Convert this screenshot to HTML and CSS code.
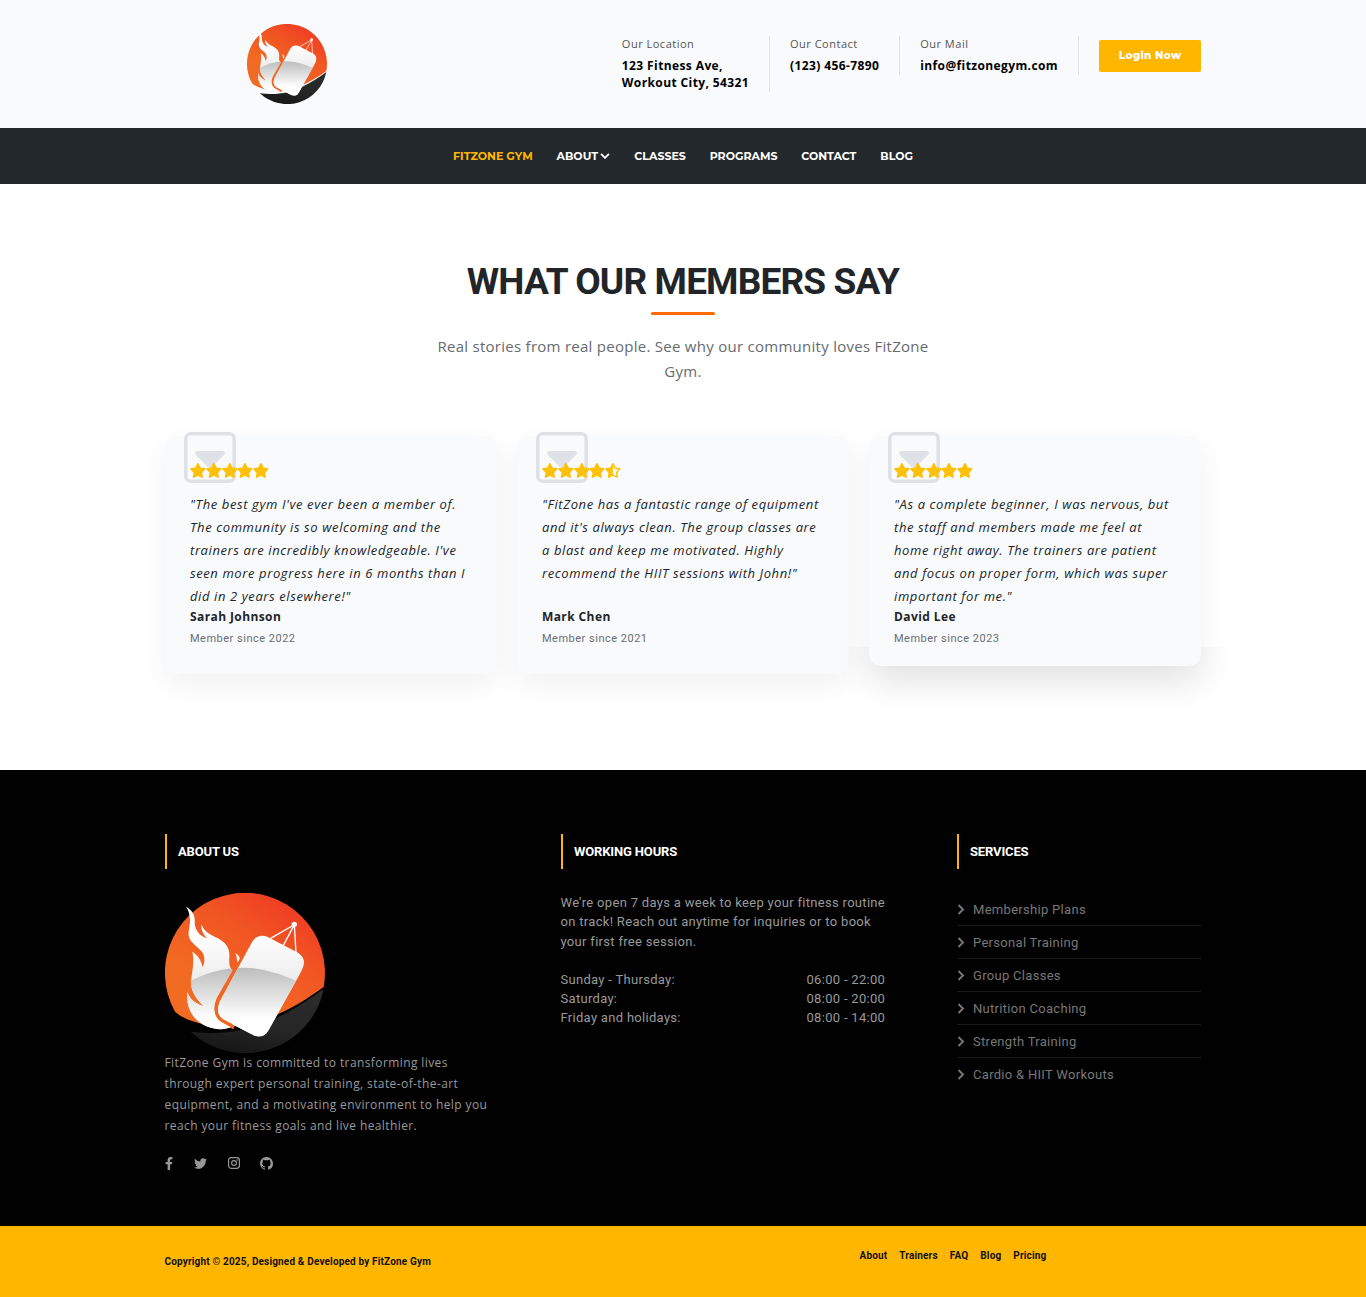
FILE: index.html
```html
<!DOCTYPE html>
<html lang="en">
<head>
<meta charset="utf-8">
<title>FitZone Gym</title>
<link rel="stylesheet" href="styles.css">
</head>
<body>
<svg class="sprite" aria-hidden="true">
  <defs>
    <linearGradient id="flame" x1="0.8" y1="0" x2="0.3" y2="0.7"><stop offset="0" stop-color="#ef3824"/><stop offset="0.45" stop-color="#f15423"/><stop offset="1" stop-color="#f26b22"/></linearGradient>
    <linearGradient id="coal" x1="0.8" y1="0" x2="0.4" y2="1"><stop offset="0" stop-color="#2b2b2b"/><stop offset="0.6" stop-color="#262626"/><stop offset="1" stop-color="#171717"/></linearGradient>
    <linearGradient id="upper" gradientUnits="userSpaceOnUse" x1="0" y1="150" x2="0" y2="290"><stop offset="0" stop-color="#fff"/><stop offset="1" stop-color="#ececec"/></linearGradient>
    <linearGradient id="lower" gradientUnits="userSpaceOnUse" x1="0" y1="248" x2="0" y2="400"><stop offset="0" stop-color="#bdbdbd"/><stop offset="1" stop-color="#fff"/></linearGradient>
    <clipPath id="shapes">
      <path d="M78 65C98 76 106 92 104 112C105 137 119 154 141 160C127 145 122 131 125 119C134 143 155 150 174 160C199 174 210 191 208 216C207 237 208 248 219 257L170 345C158 370 166 399 184 411L212 427C192 436 158 434 130 419C94 398 78 364 82 320C89 342 107 357 131 363C101 335 91 308 93 287C98 253 103 225 97 200C113 210 122 223 128 246C136 231 134 216 128 203C115 185 88 174 86 151C84 137 91 121 90 105C89 89 87 77 78 65Z"/>
      <path d="M226 204C237 211 240 218 239 222L233 233C229 222 231 213 226 204Z"/>
      <path d="M275 173Q291 145 322 155L414 203Q438 219 430 244Q427 255 418 270L326 435Q312 461 284 452L192 405Q168 389 176 361Q178 351 185 339Z"/>
    </clipPath>
    <symbol id="logo" viewBox="15 24 480 480">
      <path fill="url(#flame)" d="M45 380A240 240 0 1 1 491 306C440 343 390 374 340 393C270 424 200 431 140 420C101 412 68 400 45 380Z"/>
      <path fill="url(#coal)" d="M92 440C190 452 275 438 350 399C400 374 448 344 491 312A240 240 0 0 1 92 440Z"/>
      <path fill="none" stroke="#f26522" stroke-width="10" d="M222 258L173 342Q158 378 176 404Q184 412 222 428"/>
      <g clip-path="url(#shapes)"><path fill="url(#upper)" d="M60 50H450V470H60Z"/><path fill="url(#lower)" d="M60 307Q150 246 258 248Q350 252 450 310V480H60Z"/></g>
      <path fill="none" stroke="#f26522" stroke-width="9" d="M222 258L174 342Q160 376 176 398Q182 406 216 421"/>
      <path d="M332 160L403 119L370 181M403 119L408 204" fill="none" stroke="#fff" stroke-width="4"/>
      <circle cx="403" cy="118" r="8" fill="#fff"/>
    </symbol>
    <symbol id="star" viewBox="18 0 540 512"><path d="M316.9 18C311.6 7 300.4 0 288.1 0s-23.4 7-28.8 18L195 150.3 51.4 171.5c-12 1.8-22 10.2-25.7 21.7s-.7 24.2 7.9 32.7L137.8 329 113.2 474.7c-2 12 3 24.2 12.9 31.3s23 8 33.8 2.3l128.3-68.5 128.3 68.5c10.8 5.7 23.9 4.9 33.8-2.3s14.9-19.3 12.9-31.3L438.5 329 542.7 225.9c8.6-8.5 11.7-21.2 7.9-32.7s-13.7-19.9-25.7-21.7L381.2 150.3 316.9 18z"/></symbol>
    <symbol id="half" viewBox="18 0 540 512"><path fill-rule="evenodd" d="M316.9 18C311.6 7 300.4 0 288.1 0s-23.4 7-28.8 18L195 150.3 51.4 171.5c-12 1.8-22 10.2-25.7 21.7s-.7 24.2 7.9 32.7L137.8 329 113.2 474.7c-2 12 3 24.2 12.9 31.3s23 8 33.8 2.3l128.3-68.5 128.3 68.5c10.8 5.7 23.9 4.9 33.8-2.3s14.9-19.3 12.9-31.3L438.5 329 542.7 225.9c8.6-8.5 11.7-21.2 7.9-32.7s-13.7-19.9-25.7-21.7L381.2 150.3 316.9 18zM288 80l61 118 133 20-95 94 22 133-121-64z"/></symbol>
    <symbol id="caret" viewBox="0 0 52 51"><rect x="1.8" y="1.8" width="48.4" height="47.4" rx="5" fill="none" stroke="currentColor" stroke-width="3.6"/><path d="M13 19h26q3 1 1 4L28 35q-2 2-4 0L12 23q-2-3 1-4z"/></symbol>
    <symbol id="down" viewBox="0 0 10 6"><path d="M1 .8l4 4 4-4" fill="none" stroke="currentColor" stroke-width="1.8"/></symbol>
    <symbol id="right" viewBox="0 0 7 11"><path d="M1 1l4.5 4.5L1 10" fill="none" stroke="currentColor" stroke-width="1.9"/></symbol>
  </defs>
</svg>
<header class="top">
  <svg class="top-logo"><use href="#logo"/></svg>
  <div class="facts">
    <div class="fact"><span>Our Location</span><b>123 Fitness Ave,<br>Workout City, 54321</b></div>
    <div class="fact"><span>Our Contact</span><b>(123) 456-7890</b></div>
    <div class="fact"><span>Our Mail</span><b>info@fitzonegym.com</b></div>
    <a class="login">Login Now</a>
  </div>
</header>
<nav class="nav">
  <a class="active">FITZONE GYM</a><a>ABOUT <svg><use href="#down"/></svg></a><a>CLASSES</a><a>PROGRAMS</a><a>CONTACT</a><a>BLOG</a>
</nav>
<main class="reviews">
  <h2>WHAT OUR MEMBERS SAY</h2>
  <div class="rule"></div>
  <p class="lead">Real stories from real people. See why our community loves FitZone<br>Gym.</p>
  <div class="cards">
    <article class="card">
      <svg class="mark"><use href="#caret"/></svg>
      <div class="stars"><svg><use href="#star"/></svg><svg><use href="#star"/></svg><svg><use href="#star"/></svg><svg><use href="#star"/></svg><svg><use href="#star"/></svg></div>
      <p class="quote">"The best gym I've ever been a member of.<br>The community is so welcoming and the<br>trainers are incredibly knowledgeable. I've<br>seen more progress here in 6 months than I<br>did in 2 years elsewhere!"</p>
      <div class="name">Sarah Johnson</div><div class="since">Member since 2022</div>
    </article>
    <article class="card">
      <svg class="mark"><use href="#caret"/></svg>
      <div class="stars"><svg><use href="#star"/></svg><svg><use href="#star"/></svg><svg><use href="#star"/></svg><svg><use href="#star"/></svg><svg><use href="#half"/></svg></div>
      <p class="quote">"FitZone has a fantastic range of equipment<br>and it's always clean. The group classes are<br>a blast and keep me motivated. Highly<br>recommend the HIIT sessions with John!"</p>
      <div class="name">Mark Chen</div><div class="since">Member since 2021</div>
    </article>
    <article class="card raised">
      <svg class="mark"><use href="#caret"/></svg>
      <div class="stars"><svg><use href="#star"/></svg><svg><use href="#star"/></svg><svg><use href="#star"/></svg><svg><use href="#star"/></svg><svg><use href="#star"/></svg></div>
      <p class="quote">"As a complete beginner, I was nervous, but<br>the staff and members made me feel at<br>home right away. The trainers are patient<br>and focus on proper form, which was super<br>important for me."</p>
      <div class="name">David Lee</div><div class="since">Member since 2023</div>
    </article>
  </div>
</main>
<footer class="footer">
  <section class="about">
    <h3>ABOUT US</h3>
    <svg class="big-logo"><use href="#logo"/></svg>
    <p>FitZone Gym is committed to transforming lives<br>through expert personal training, state-of-the-art<br>equipment, and a motivating environment to help you<br>reach your fitness goals and live healthier.</p>
    <div class="social">
      <svg class="fb" viewBox="0 0 320 512"><path d="M279.14 288l14.22-92.66h-88.91v-60.13c0-25.35 12.42-50.06 52.24-50.06h40.42V6.26S260.43 0 225.36 0c-73.22 0-121.08 44.38-121.08 124.72v70.62H22.89V288h81.39v224h100.17V288z"/></svg>
      <svg class="tw" viewBox="0 0 512 512"><path d="M459.37 151.716c.325 4.548.325 9.097.325 13.645 0 138.72-105.583 298.558-298.558 298.558-59.452 0-114.68-17.219-161.137-47.106 8.447.974 16.568 1.299 25.34 1.299 49.055 0 94.213-16.568 130.274-44.832-46.132-.975-84.792-31.188-98.112-72.772 6.498.974 12.995 1.624 19.818 1.624 9.421 0 18.843-1.3 27.614-3.573-48.081-9.747-84.143-51.98-84.143-102.985v-1.299c13.969 7.797 30.214 12.67 47.431 13.319-28.264-18.843-46.781-51.005-46.781-87.391 0-19.492 5.197-37.36 14.294-52.954 51.655 63.675 129.3 105.258 216.365 109.807-1.624-7.797-2.599-15.918-2.599-24.04 0-57.828 46.782-104.934 104.934-104.934 30.213 0 57.502 12.67 76.67 33.137 23.715-4.548 46.456-13.32 66.599-25.34-7.798 24.366-24.366 44.833-46.132 57.827 21.117-2.273 41.584-8.122 60.426-16.243-14.292 20.791-32.161 39.308-52.628 54.253z"/></svg>
      <svg class="ig" viewBox="0 0 12 12"><rect x=".6" y=".6" width="10.8" height="10.8" rx="2.8" fill="none" stroke="currentColor" stroke-width="1.2"/><circle cx="6" cy="6" r="2.4" fill="none" stroke="currentColor" stroke-width="1.2"/><circle cx="9.1" cy="2.9" r=".75"/></svg>
      <svg class="gh" viewBox="0 0 16 16"><path d="M8 0C3.58 0 0 3.58 0 8c0 3.54 2.29 6.53 5.47 7.59.4.07.55-.17.55-.38 0-.19-.01-.82-.01-1.49-2.01.37-2.53-.49-2.69-.94-.09-.23-.48-.94-.82-1.13-.28-.15-.68-.52-.01-.53.63-.01 1.08.58 1.23.82.72 1.21 1.87.87 2.33.66.07-.52.28-.87.51-1.07-1.78-.2-3.64-.89-3.64-3.95 0-.87.31-1.59.82-2.15-.08-.2-.36-1.02.08-2.12 0 0 .67-.21 2.2.82.64-.18 1.32-.27 2-.27s1.36.09 2 .27c1.53-1.04 2.2-.82 2.2-.82.44 1.1.16 1.92.08 2.12.51.56.82 1.27.82 2.15 0 3.07-1.87 3.75-3.65 3.95.29.25.54.73.54 1.48 0 1.07-.01 1.93-.01 2.2 0 .21.15.46.55.38A8.01 8.01 0 0 0 16 8c0-4.42-3.58-8-8-8z"/></svg>
    </div>
  </section>
  <section class="hours">
    <h3>WORKING HOURS</h3>
    <p>We’re open 7 days a week to keep your fitness routine<br>on track! Reach out anytime for inquiries or to book<br>your first free session.</p>
    <dl><dt>Sunday - Thursday:</dt><dd>06:00 - 22:00</dd><dt>Saturday:</dt><dd>08:00 - 20:00</dd><dt>Friday and holidays:</dt><dd>08:00 - 14:00</dd></dl>
  </section>
  <section class="services">
    <h3>SERVICES</h3>
    <ul>
      <li><svg><use href="#right"/></svg>Membership Plans</li>
      <li><svg><use href="#right"/></svg>Personal Training</li>
      <li><svg><use href="#right"/></svg>Group Classes</li>
      <li><svg><use href="#right"/></svg>Nutrition Coaching</li>
      <li><svg><use href="#right"/></svg>Strength Training</li>
      <li><svg><use href="#right"/></svg>Cardio &amp; HIIT Workouts</li>
    </ul>
  </section>
</footer>
<div class="bottom">
  <p>Copyright © 2025, Designed &amp; Developed by FitZone Gym</p>
  <div class="links"><a>About</a><a>Trainers</a><a>FAQ</a><a>Blog</a><a>Pricing</a></div>
</div>
</body>
</html>
```
FILE: styles.css
```css
* { box-sizing: border-box; }
body { margin: 0; background: #fff; color: #212529; font-family: "Open Sans", "Noto Sans", sans-serif; letter-spacing: .5px; }
h2, h3, p, ul, dl, dd { margin: 0; padding: 0; }
svg { display: block; fill: currentColor; }
.sprite { position: absolute; width: 0; height: 0; }

.top { height: 128px; background: #f8fafc; padding: 24px 165px 0 247px; display: flex; justify-content: space-between; }
.top-logo { width: 80px; height: 80px; }
.facts { display: flex; align-items: flex-start; padding-top: 12px; }
.fact { border-right: 1px solid #dee2e6; padding-right: 20px; margin-right: 20px; font-size: 11px; line-height: 17px; color: #555; }
.fact span { display: block; margin: -1px 0 5px; }
.fact b { display: block; margin-bottom: 1px; font-size: 12px; font-weight: 700; letter-spacing: .39px; color: #000; }
.login { width: 102px; height: 32px; margin-top: 4px; background: #ffb600; color: #fff; border-radius: 2px; font: 800 10.5px/31px Montserrat, "Open Sans", sans-serif; letter-spacing: .3px; text-align: center; }

.nav { height: 56px; background: #23282c; display: flex; justify-content: center; align-items: center; gap: 23.9px; color: #fff; font: 700 11px/16px Montserrat, Inter, sans-serif; letter-spacing: -.01px; }
.nav a { display: flex; align-items: center; gap: 2.5px; }
.nav svg { width: 10px; height: 6px; }
.nav .active { color: #ffb600; }

.reviews { height: 586px; padding: 76px 164.5px 0; }
h2 { text-align: center; font: 700 37px/44px Roboto, sans-serif; letter-spacing: -.85px; }
.rule { width: 64px; height: 3px; margin: 8px auto 0; border-radius: 2px; background: #ff6a00; }
.lead { margin-top: 19px; text-align: center; font-size: 15px; line-height: 25px; letter-spacing: .27px; color: #666b70; }
.cards { display: grid; grid-template-columns: repeat(3, 332px); gap: 20px; margin-top: 52px; }
.card { position: relative; height: 238px; padding: 27px 0 0 25.5px; border-radius: 12px; background: #f8fafc; box-shadow: 0 10px 30px rgba(0,0,0,.06); }
.mark { position: absolute; left: 19px; top: -4px; width: 52px; height: 51px; color: #dee2e6; }
.stars { position: relative; display: flex; height: 16px; color: #ffc107; }
.stars svg { width: 15.75px; height: 15px; margin-top: 0; }
.quote { height: 115px; margin-top: 14px; font-size: 13px; font-style: italic; line-height: 23px; letter-spacing: .6px; white-space: nowrap; }
.name { font-size: 12px; font-weight: 700; line-height: 18px; letter-spacing: .4px; }
.since { margin-top: 4px; font: 400 11px/18px Roboto, sans-serif; color: #6a6e72; }
.raised { height: 230px; box-shadow: none; isolation: isolate; background: none; }
.raised::before, .raised::after { content: ""; position: absolute; z-index: -1; left: 0; top: 0; width: 100%; border-radius: 12px; background: #f8fafc; }
.raised::before { height: 238px; box-shadow: 0 10px 30px rgba(0,0,0,.06); clip-path: inset(-50px -50px 27px -50px); }
.raised::after { height: 230px; box-shadow: 0 15px 35px rgba(0,0,0,.12); clip-path: inset(211px -70px -70px -70px); }

.footer { height: 456px; padding: 64px 164.5px 0; background: #010101; color: #999; display: grid; grid-template-columns: 324px 324px 244px; gap: 72px; }
h3 { height: 35px; padding-left: 11.5px; border-left: 2px solid #ffb600; color: #fff; font: 700 13px/35px Roboto, sans-serif; letter-spacing: -.15px; }
.big-logo { width: 160px; height: 160px; margin-top: 24px; }
.about p { margin-top: -1px; font-size: 12px; line-height: 21px; letter-spacing: .4px; white-space: nowrap; }
.social { display: flex; align-items: center; margin-top: 20px; height: 14px; }
.fb { width: 8px; height: 13px; }
.tw { width: 13px; height: 13px; margin-left: 21px; }
.ig { width: 12px; height: 12px; margin-left: 21px; }
.gh { width: 13px; height: 13px; margin-left: 20px; }
.hours p { margin-top: 23.5px; font: 400 13px/19.5px Roboto, sans-serif; letter-spacing: .31px; white-space: nowrap; }
.hours dl { margin: 18.5px -.7px 0 0; display: grid; grid-template-columns: 1fr auto; font: 400 13px/19px Roboto, sans-serif; letter-spacing: .3px; }
.services ul { margin-top: 24px; list-style: none; font: 400 13px/32px Roboto, sans-serif; letter-spacing: .3px; color: #777; }
.services li { display: flex; align-items: center; gap: 8.5px; height: 33px; padding-top: 1px; border-bottom: 1px solid #181818; }
.services li:last-child { border: 0; padding: 0; }
.services svg { width: 8px; height: 11px; margin-top: -1px; }

.bottom { height: 71px; padding: 0 164.5px; background: #ffb600; color: #111; display: flex; font: 700 10px/15px Roboto, sans-serif; letter-spacing: .16px; }
.bottom p { width: 695px; padding-top: 28px; }
.links { display: flex; gap: 12px; padding-top: 22px; }
```
